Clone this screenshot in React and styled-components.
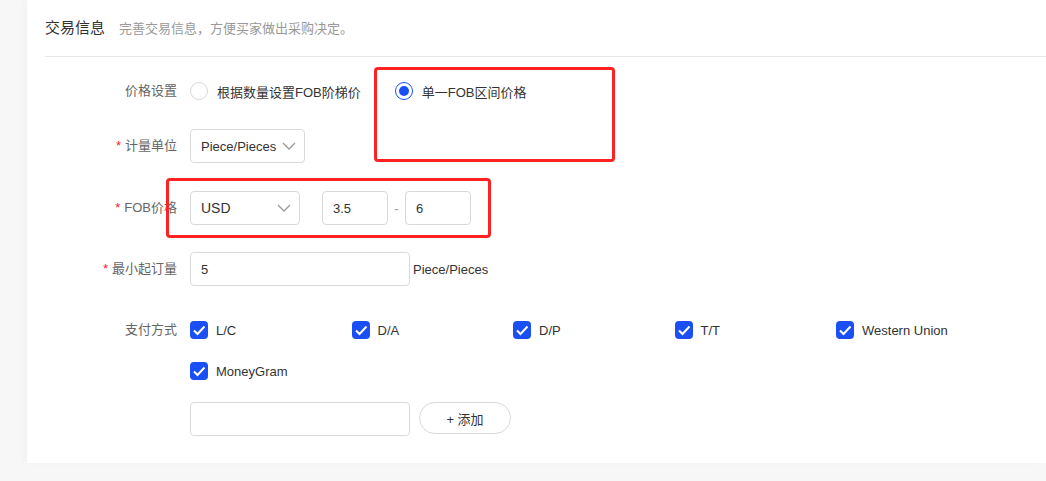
import React, {useState} from "react";
import styled, {createGlobalStyle} from "styled-components"

const GlobalStyle = createGlobalStyle`
    body {
        margin: 0;
        background: #f7f7f7;
        font-family: "Liberation Sans", "Noto Sans CJK SC", sans-serif;
        color: #333;
    }
`

const Page = styled.div`
    position: relative;
    padding-left: 27px;
    height: 481px;
    overflow: hidden;
`

const Card = styled.div`
    position: relative;
    background: #fff;
    height: 463px;
    padding-left: 18px;
    box-shadow: -4px 0 6px rgba(0, 0, 0, 0.02);
`

const Header = styled.div`
    display: flex;
    align-items: center;
    height: 53px;
    padding-bottom: 3px;
    border-bottom: 1px solid #e8e8e8;
    gap: 14px;
`

const Title = styled.span`
    font-size: 15px;
    color: #333;
`

const SubTitle = styled.span`
    font-size: 13px;
    color: #999;
    margin-top: 1px;
`

const Form = styled.div`
    display: flex;
    flex-direction: column;
`

const Row = styled.div`
    display: flex;
    align-items: ${p => p.$top ? "flex-start" : "center"};
    margin-top: ${p => p.$mt}px;
    min-height: ${p => p.$h || 34}px;
`

const Label = styled.div`
    width: 132px;
    margin-right: 13px;
    text-align: right;
    font-size: 13px;
    color: #666;
    line-height: 20px;
    flex-shrink: 0;
`

const Star = styled.span`
    color: #f5222d;
    margin-right: 4px;
`

const RadioItem = styled.label`
    display: flex;
    align-items: center;
    gap: 9px;
    font-size: 13px;
    color: #333;
    margin-right: ${p => p.$mr || 0}px;
`

const RadioCircle = styled.span`
    width: 18px;
    height: 18px;
    box-sizing: border-box;
    border-radius: 50%;
    border: 1px solid ${p => p.$on ? "#1a4ff5" : "#d9d9d9"};
    display: flex;
    align-items: center;
    justify-content: center;
    &::after {
        content: "";
        display: ${p => p.$on ? "block" : "none"};
        width: 10px;
        height: 10px;
        border-radius: 50%;
        background: #1a4ff5;
    }
`

const Select = styled.div`
    box-sizing: border-box;
    width: ${p => p.$w}px;
    height: 34px;
    border: 1px solid #d9d9d9;
    border-radius: 4px;
    display: flex;
    align-items: center;
    justify-content: space-between;
    padding: 0 8px 0 10px;
    font-size: ${p => p.$fs || 13}px;
    color: #333;
`

const Input = styled.div`
    box-sizing: border-box;
    width: ${p => p.$w}px;
    height: 34px;
    border: 1px solid #d9d9d9;
    border-radius: 4px;
    display: flex;
    align-items: center;
    padding-left: 10px;
    font-size: 13px;
    color: #333;
    margin-left: ${p => p.$ml || 0}px;
`

const Dash = styled.span`
    width: 17px;
    text-align: center;
    font-size: 13px;
    color: #999;
`

const Unit = styled.span`
    font-size: 13px;
    color: #333;
    margin-left: 3px;
`

const CheckGrid = styled.div`
    display: grid;
    grid-template-columns: repeat(5, 161.5px);
    row-gap: 21px;
`

const CheckItem = styled.label`
    display: flex;
    align-items: center;
    gap: 8px;
    height: 20px;
    font-size: 13px;
    color: #333;
`

const CheckBox = styled.span`
    width: 18px;
    height: 18px;
    border-radius: 4px;
    background: #1a4ff5;
    display: flex;
    align-items: center;
    justify-content: center;
`

const AddButton = styled.button`
    box-sizing: border-box;
    align-self: flex-start;
    width: 92px;
    height: 32px;
    margin-left: 9px;
    padding: 0;
    border: 1px solid #d9d9d9;
    border-radius: 16px;
    background: #fff;
    font-family: inherit;
    font-size: 13px;
    color: #333;
`

const Mark = styled.div`
    position: absolute;
    left: ${p => p.$x}px;
    top: ${p => p.$y}px;
    width: ${p => p.$w}px;
    height: ${p => p.$h}px;
    box-sizing: border-box;
    border: 3px solid #ff2222;
    border-radius: 4px;
    pointer-events: none;
`

function Chevron(){
    return(
        <svg width="14" height="8" viewBox="0 0 14 8">
            <path d="M1 1 L7 7 L13 1" fill="none" stroke="#999" strokeWidth="1.3"/>
        </svg>
    )
}

function Tick(){
    return(
        <svg width="14" height="12" viewBox="0 0 14 12">
            <path d="M2 6.5 L5.5 10 L12.5 2.5" fill="none" stroke="#fff" strokeWidth="2"/>
        </svg>
    )
}

const payments = ["L/C", "D/A", "D/P", "T/T", "Western Union", "MoneyGram"]

function App(){
    const [mode] = useState(1)

    return(
        <Page>
            <GlobalStyle/>
            <Card>
                <Header>
                    <Title>交易信息</Title>
                    <SubTitle>完善交易信息，方便买家做出采购决定。</SubTitle>
                </Header>
                <Form>
                    <Row $mt={17}>
                        <Label>价格设置</Label>
                        <RadioItem $mr={34}>
                            <RadioCircle $on={mode === 0}/>
                            根据数量设置FOB阶梯价
                        </RadioItem>
                        <RadioItem>
                            <RadioCircle $on={mode === 1}/>
                            单一FOB区间价格
                        </RadioItem>
                    </Row>
                    <Row $mt={21}>
                        <Label><Star>*</Star>计量单位</Label>
                        <Select $w={115}>Piece/Pieces<Chevron/></Select>
                    </Row>
                    <Row $mt={28}>
                        <Label><Star>*</Star>FOB价格</Label>
                        <Select $w={110} $fs={14}>USD<Chevron/></Select>
                        <Input $w={66} $ml={22}>3.5</Input>
                        <Dash>-</Dash>
                        <Input $w={66}>6</Input>
                    </Row>
                    <Row $mt={27}>
                        <Label><Star>*</Star>最小起订量</Label>
                        <Input $w={220}>5</Input>
                        <Unit>Piece/Pieces</Unit>
                    </Row>
                    <Row $mt={34} $top>
                        <Label>支付方式</Label>
                        <CheckGrid>
                            {payments.map(p => (
                                <CheckItem key={p}>
                                    <CheckBox><Tick/></CheckBox>
                                    {p}
                                </CheckItem>
                            ))}
                        </CheckGrid>
                    </Row>
                    <Row $mt={21}>
                        <Label/>
                        <Input $w={220}/>
                        <AddButton>+ 添加</AddButton>
                    </Row>
                </Form>
            </Card>
            <Mark $x={374} $y={67} $w={241} $h={95}/>
            <Mark $x={166} $y={178} $w={325} $h={60}/>
        </Page>
    );
}

export default App
